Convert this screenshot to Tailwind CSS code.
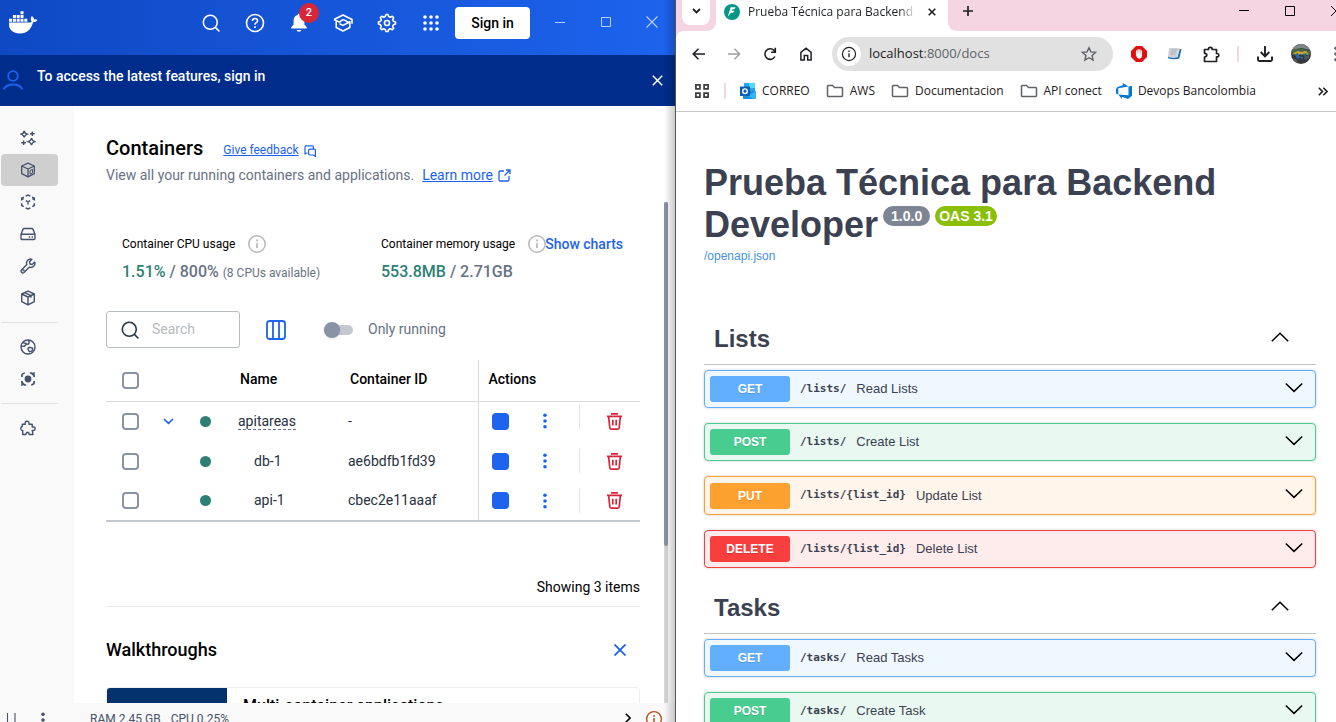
<!DOCTYPE html>
<html lang="en">
<head>
<meta charset="utf-8">
<title>Docker Desktop and API docs</title>
<script src="https://cdn.jsdelivr.net/npm/@tailwindcss/browser@4"></script>
</head>
<body class="h-screen overflow-hidden bg-white">
<svg width="0" height="0" class="hidden">
  <symbol id="search" viewBox="0 0 20 20"><g fill="none" stroke="currentColor" stroke-width="1.6" stroke-linecap="round"><circle cx="9.3" cy="9.3" r="7"/><path d="M14.6 14.6 18 18"/></g></symbol>
  <symbol id="info" viewBox="0 0 20 20"><circle cx="10" cy="10" r="8.2" fill="none" stroke="currentColor" stroke-width="1.5"/><path d="M10 9v5M10 5.6v1.8" stroke="currentColor" stroke-width="1.7" fill="none"/></symbol>
  <symbol id="down" viewBox="0 0 20 20"><path d="M1.8 5.5 10 13.4l8.2-7.9" fill="none" stroke="#000" stroke-width="1.5"/></symbol>
  <symbol id="up" viewBox="0 0 20 20"><path d="M1.8 14.2 10 6.2l8.2 8" fill="none" stroke="#000" stroke-width="1.5"/></symbol>
  <symbol id="folder" viewBox="0 0 18 14"><path d="M1.9 1.5h4.6l2 2h7.2q.8 0 .8.8v7.2q0 .9-.8.9H2.3q-.8 0-.8-.9V2.2q0-.7.6-.7z" fill="none" stroke="#5f6368" stroke-width="1.5"/></symbol>
  <symbol id="dots" viewBox="0 0 4 16"><g fill="currentColor"><circle cx="2" cy="2.3" r="1.8"/><circle cx="2" cy="8" r="1.8"/><circle cx="2" cy="13.7" r="1.8"/></g></symbol>
  <symbol id="trash" viewBox="0 0 18 18"><g fill="none" stroke="#d72638" stroke-width="1.8"><path d="M1 3.6h16M5.3 1h7.4M2.8 3.6l1.2 12q.1 1.4 1.4 1.4h7.2q1.300 0 1.400-1.400l1.200-12M7.200 7.200v6M10.800 7.200v6"/></g></symbol>
</svg>
<div class="grid h-screen grid-cols-[676fr_660fr]">

<!-- Docker Desktop -->
<section class="relative flex h-screen min-w-0 flex-col overflow-hidden border-r border-[#555] bg-white font-[Roboto,sans-serif] text-black">
  <header class="flex h-[55px] shrink-0 items-start bg-linear-to-r from-[#0f49c4] to-[#1d63ed] text-white">
    <svg class="mt-[10px] ml-[8px] h-6 w-[30px]" viewBox="0 0 30 24" fill="#fff"><path d="M1 12.6h20.6c1-.1 1.6-.4 2.1-1-1.4-1.700-1.200-3.900.1-5.700 1.500 1 2.200 2.200 2.300 3.600 1.300-.3 2.500-.1 3.300.6-.9 1.500-2.300 2.200-4.300 2.200C23.100 19.600 19 23.400 12 23.400 4.600 23.400.4 19.800 1 12.600z"/><path d="M1.100 8.800h3v3h-3zM4.900 8.800h3v3h-3zM8.700 8.800h3v3h-3zM12.500 8.800h3v3h-3zM16.300 8.800h3v3h-3zM4.900 5h3v3h-3zM8.700 5h3v3h-3zM12.500 5h3v3h-3zM12.500 1.200h3v3h-3z"/></svg>
    <div class="ml-auto flex h-[46px] items-center gap-6">
      <button aria-label="Search"><svg class="block size-5"><use href="#search"/></svg></button>
      <button aria-label="Help"><svg class="block size-5" viewBox="0 0 20 20" fill="none" stroke="currentColor" stroke-width="1.600"><circle cx="10" cy="10" r="8.500"/><path d="M7.400 8q.1-2.500 2.600-2.500t2.600 2.200Q12.600 9 11 9.900q-1 .6-1 1.900M10 13.200v1.700"/></svg></button>
      <button aria-label="Notifications, 2" class="relative"><svg class="block size-5" viewBox="0 0 20 20" fill="#fff"><path d="M10 .8c.9 0 1.400.6 1.400 1.300 2.700.7 4 2.800 4 5.300v4.200l2.400 2.700v1.300H2.200v-1.300l2.400-2.700V7.400c0-2.500 1.300-4.600 4-5.300C8.600 1.400 9.100.8 10 .8zM7.500 17h5q-.7 1.800-2.500 1.800T7.500 17z"/></svg><span class="absolute -top-[10px] left-[10px] size-5 rounded-full bg-[#d72638] text-center text-[11px] leading-5 font-medium">2</span></button>
      <button aria-label="Learning center"><svg class="block size-5" viewBox="0 0 20 20" fill="none" stroke="currentColor" stroke-width="1.600" stroke-linejoin="round"><path d="M1 6.500 10 2l9 4.500v4.200M3.200 8v6.500L10 18l6.800-3.500V8M1 6.500l5.500 2.600L9 7.200q1.300-.8 2.600-.1l4 2.400-5.600 2.900-3.500-1.700"/></svg></button>
      <button aria-label="Settings"><svg class="block size-5" viewBox="0 0 20 20" fill="none" stroke="currentColor" stroke-width="1.600" stroke-linejoin="round"><path d="M8.300 3.600 9 1.500h2l.7 2.100 1.600.7 2-1 1.400 1.400-1 2 .7 1.600 2.100.7v2l-2.100.7-.7 1.600 1 2-1.400 1.400-2-1-1.600.7-.7 2.100H9l-.7-2.100-1.600-.7-2 1-1.400-1.400 1-2-.7-1.600L1.500 11V9l2.100-.7.7-1.600-1-2 1.400-1.400 2 1z"/><circle cx="10" cy="10" r="2.500"/></svg></button>
      <button aria-label="Extensions"><svg class="block size-5" viewBox="0 0 20 20" fill="#fff"><g id="gr"><circle cx="4" cy="4" r="1.800"/><circle cx="10" cy="4" r="1.800"/><circle cx="16" cy="4" r="1.800"/></g><use href="#gr" y="6"/><use href="#gr" y="12"/></svg></button>
    </div>
    <button class="mt-[7px] ml-[14px] h-8 w-[75px] rounded bg-white text-sm font-medium text-black">Sign in</button>
    <div class="flex h-11 items-center gap-[34px] pr-[17px] pl-6 text-[#b9cdf8]">
      <button aria-label="Minimize"><svg class="block size-3" viewBox="0 0 12 12"><path d="M1 6.500h10" stroke="currentColor"/></svg></button>
      <button aria-label="Maximize"><svg class="block size-3" viewBox="0 0 12 12"><path d="M1.500 1.500h9v9h-9z" fill="none" stroke="currentColor"/></svg></button>
      <button aria-label="Close"><svg class="block size-3" viewBox="0 0 12 12"><path d="m.5.5 11 11m0-11-11 11" stroke="currentColor" stroke-width="1.100"/></svg></button>
    </div>
  </header>
  <div class="flex h-[51px] shrink-0 items-center bg-[#002d8c] text-white">
    <svg class="ml-[2px] size-[22px]" viewBox="0 0 22 22" fill="none" stroke="#1d63ed" stroke-width="1.800"><circle cx="11" cy="6" r="4.800"/><path d="M1.500 19.500q2.500-5 9.500-5t9.500 5"/></svg>
    <p class="ml-[13px] pb-[9px] text-sm font-medium">To access the latest features, <a href="#">sign in</a></p>
    <button aria-label="Dismiss" class="mr-3 ml-auto"><svg class="block size-[11px]" viewBox="0 0 11 11"><path d="m.8.800 9.400 9.400m0-9.400L.8 10.200" stroke="#fff" stroke-width="1.500"/></svg></button>
  </div>

  <div class="flex min-h-0 flex-1">
    <nav class="flex w-[74px] shrink-0 flex-col bg-[#f9f9fa] pt-4 pr-4 pl-px text-[#46516a]">
      <a href="#" aria-label="Ask Gordon" class="flex h-8 items-center justify-center"><svg class="mr-1 size-4" viewBox="0 0 16 16" fill="none" stroke="currentColor" stroke-width="1.400"><path d="M4.200 1q.5 2.400 3 3.200-2.500.8-3 3.200-.5-2.400-3-3.200 2.500-.8 3-3.200zM11.500 8.200q.5 2.700 3.300 3.500-2.800.8-3.300 3.500-.5-2.700-3.300-3.500 2.800-.8 3.300-3.500zM12.300 1.500v4.600M10 3.800h4.600M3.600 10.500v4.600M1.300 12.800h4.600"/></svg></a>
      <a href="#" aria-label="Containers" class="flex h-8 items-center justify-center rounded bg-[#cfcfd0]"><svg class="mr-1 size-4" viewBox="0 0 16 16" fill="none" stroke="currentColor" stroke-width="1.300" stroke-linejoin="round"><path d="M8 1.200 14.300 4v7.600L8 14.800l-6.300-3.200V4zM1.700 4 8 7l6.300-3M8 7v7.800"/><path d="M10 8.600l2.500-1.200v3.500L10 12.200z" stroke-width="1"/></svg></a>
      <a href="#" aria-label="Images" class="flex h-8 items-center justify-center"><svg class="mr-1 size-4" viewBox="0 0 16 16" fill="none" stroke="currentColor" stroke-width="1.500"><path d="M5.600 2.200 8 1l2.400 1.200M12.200 3.100l2.100 1.100v2.300M14.300 9.200v2.300l-2 1.100M10.400 13.800 8 15l-2.400-1.200M3.700 12.600l-2-1.100V9.200M1.700 6.500V4.200l2.100-1.100M1.700 4.200l2 1M14.300 4.200l-2 1M5.800 6.700 8 7.900l2.200-1.200M8 7.900v2.600"/></svg></a>
      <a href="#" aria-label="Volumes" class="flex h-8 items-center justify-center"><svg class="mr-1 size-4" viewBox="0 0 16 16" fill="none" stroke="currentColor" stroke-width="1.400"><path d="M1 8.500 3 3.300q.3-.8 1.200-.8h7.600q.9 0 1.200.8l2 5.200v3.800q0 1.200-1.200 1.200H2.200Q1 13.500 1 12.300zM1 8.300h14M8.800 11h1.400M11.600 11H13"/></svg></a>
      <a href="#" aria-label="Builds" class="flex h-8 items-center justify-center"><svg class="mr-1 size-4" viewBox="0 0 16 16" fill="none" stroke="currentColor" stroke-width="1.400" stroke-linejoin="round"><path d="M11.900 1.300a4 4 0 0 0-5 5.300L1.500 12q-1 1.200.1 2.400t2.400.1l5.400-5.400a4 4 0 0 0 5.300-5l-2.500 2.400-2.200-.5-.5-2.200z"/><circle cx="3.600" cy="12.400" r=".4"/></svg></a>
      <a href="#" aria-label="Models" class="flex h-8 items-center justify-center"><svg class="mr-1 size-4" viewBox="0 0 16 16" fill="none" stroke="currentColor" stroke-width="1.400" stroke-linejoin="round"><path d="M8 1.200 14.300 4v7.600L8 14.800l-6.300-3.200V4zM1.700 4 8 7l6.300-3M8 7v7.800M4.700 2.600 11 5.600v2.200"/></svg></a>
      <hr class="my-2 border-[#e1e2e6]">
      <a href="#" aria-label="Docker Hub" class="flex h-8 items-center justify-center"><svg class="mr-1 size-4" viewBox="0 0 16 16" fill="none" stroke="currentColor" stroke-width="1.400"><circle cx="8" cy="8" r="7"/><path d="M1 7q3 1 4-.5T8.600 5Q10 3 8.400 1M3 3.200q1.500 1.600 3.600 1M8 9.200l1.800-.9 2.800.9-.5 2.800-2.600.8L8.300 11z"/></svg></a>
      <a href="#" aria-label="Docker Scout" class="flex h-8 items-center justify-center"><svg class="mr-1 size-4" viewBox="0 0 16 16" fill="none" stroke="currentColor" stroke-width="1.700"><circle cx="8" cy="8" r="3.400" fill="currentColor" stroke="none"/><path d="M1.900 6V4.500Q2 2.500 4.800 2M14.100 10v1.500q-.1 2-2.900 2.500M9.800 2h1.700l2.600 2.300V6M6.200 14H4.500l-2.600-2.300V10"/><path d="M11 2.200 15 1l-1 4.200zM5 13.800 1 15l1-4.200z" fill="currentColor" stroke="none"/></svg></a>
      <hr class="my-2 border-[#e1e2e6]">
      <a href="#" aria-label="Extensions" class="flex h-8 items-center justify-center"><svg class="mr-1 size-4" viewBox="0 0 16 16" fill="none" stroke="currentColor" stroke-width="1.400" stroke-linejoin="round"><path d="M5.300 4.200q-.6-3 1.700-3t1.900 3h3.300V7q2.900-.4 2.900 1.700t-2.900 1.700L13 14.500H9.200q-.1-2.300-1.600-2.300T6 14.500H2.700v-3.800Q.7 10.200.7 8.500t1.600-2V4.200z"/></svg></a>
    </nav>

    <main class="flex min-w-0 flex-1 flex-col pt-[30px] pr-[7px] pl-8">
      <div class="flex h-6 items-center">
        <h1 class="text-xl font-medium">Containers</h1>
        <a href="#" class="ml-5 flex items-center gap-[5px] pt-1 text-xs text-[#1d63ed]"><span class="underline">Give feedback</span><svg class="mt-[2px] size-3" viewBox="0 0 12 12" fill="none" stroke="currentColor" stroke-width="1.200" stroke-linejoin="round"><path d="M3.500 8H2.800L1 9V2q0-1.200 1.200-1.200h6Q9.400.800 9.400 2v2M5.800 4.200h4.400q1.200 0 1.200 1.200v6L9.500 10H5.800q-1.200 0-1.200-1.200V5.400q0-1.200 1.200-1.200z"/></svg></a>
      </div>
      <p class="mt-1 flex h-[22px] shrink-0 items-center text-sm text-[#677285]">View all your running containers and applications.<a href="#" class="ml-2 flex items-center gap-[5px] text-[#1d63ed]"><span class="underline">Learn more</span><svg class="size-[13px]" viewBox="0 0 13 13" fill="none" stroke="currentColor" stroke-width="1.300"><path d="M6 2H2.200Q1 2 1 3.200v7.600Q1 12 2.200 12h7.600q1.200 0 1.200-1.200V7M8 1h4v4M12 1 6.500 6.500"/></svg></a></p>

      <div class="mt-4 flex min-h-0 flex-1">
        <div class="mr-6 min-w-0 flex-1 overflow-hidden">
          <div class="flex pt-8 pl-4">
            <div class="w-[259px] shrink-0">
              <div class="flex h-5 items-center gap-3 text-xs">Container CPU usage <svg class="size-5 text-[#b8b8b8]"><use href="#info"/></svg></div>
              <div class="mt-[6px] h-6 text-base leading-6 font-medium text-[#677285]"><span class="text-[#2e7f74]">1.51%</span> / 800% <span class="text-xs font-normal">(8 CPUs available)</span></div>
            </div>
            <div>
              <div class="flex h-5 items-center text-xs">Container memory usage <svg class="ml-3 size-5 text-[#b8b8b8]"><use href="#info"/></svg><button class="-ml-[2px] pb-px text-sm font-medium whitespace-nowrap text-[#1d63ed]">Show charts</button></div>
              <div class="mt-[6px] h-6 text-base leading-6 font-medium text-[#677285]"><span class="text-[#2e7f74]">553.8MB</span> / 2.71GB</div>
            </div>
          </div>
          <div class="mt-[27px] flex items-center">
            <label class="flex h-[37px] w-[134px] items-center gap-3 rounded-[3px] border border-[#b9bdc6] pl-[13px]"><svg class="size-5 shrink-0 text-[#2b3445]"><use href="#search"/></svg><input type="search" placeholder="Search" aria-label="Search containers" class="w-20 pb-px text-sm outline-none placeholder:text-[#b5b9c0]"></label>
            <button aria-label="Columns" class="ml-[26px]"><svg class="block size-5" viewBox="0 0 20 20" fill="none" stroke="#1d63ed" stroke-width="1.800"><rect x="1" y="1" width="18" height="18" rx="2.500"/><path d="M7 1v18M13 1v18"/></svg></button>
            <label class="ml-[38px] flex items-center text-sm text-[#677285]"><span class="relative mr-[15px] flex h-4 w-[29px] items-center"><span class="h-[10px] w-full rounded-full bg-[#c4c8d1]"></span><input type="checkbox" role="switch" class="absolute left-0 size-4 appearance-none rounded-full bg-[#8993a5] shadow"></span><span class="pb-px">Only running</span></label>
          </div>
          <table class="mt-3 w-full table-fixed border-collapse border-b-2 border-[#c4c8d1] text-left text-sm">
            <colgroup><col class="w-[44px]"><col class="w-[36px]"><col class="w-[38px]"><col class="w-[116px]"><col><col class="w-[162px]"></colgroup>
            <thead><tr class="h-[41px] border-b border-[#d9dbe0]">
              <th class="pl-4"><input type="checkbox" aria-label="Select all" class="block size-[17px] appearance-none rounded-[4px] border-2 border-[#8993a5]"></th><th></th><th></th>
              <th class="pb-[2px] pl-4 font-medium">Name</th><th class="pb-[2px] pl-[10px] font-medium">Container ID</th><th class="border-l border-[#d9dbe0] pb-[2px] pl-[10px] font-medium">Actions</th></tr></thead>
            <tbody class="text-[#27303f]">
              <tr class="h-10"><td class="pl-4"><input type="checkbox" aria-label="Select apitareas" class="block size-[17px] appearance-none rounded-[4px] border-2 border-[#8993a5]"></td>
                <td><button aria-label="Collapse" class="mx-auto block"><svg class="block h-[7px] w-[11px]" viewBox="0 0 11 7"><path d="m1 1 4.500 4.300L10 1" fill="none" stroke="#1d63ed" stroke-width="1.700"/></svg></button></td>
                <td><span class="mx-auto block size-[11px] rounded-full bg-[#2e7f74]"></span></td><td class="pl-[14px]"><a href="#" class="border-b border-dashed border-[#677285]">apitareas</a></td><td class="pl-2">-</td>
                <td class="border-l border-[#d9dbe0]"><div class="flex items-center pl-[13px]"><button aria-label="Stop apitareas" class="size-[17px] rounded-[4px] bg-[#1d63ed]"></button><button aria-label="More" class="ml-[34px] text-[#1d63ed]"><svg class="block h-4 w-1"><use href="#dots"/></svg></button><span class="mb-2 ml-8 h-6 w-px bg-[#e1e2e6]"></span><button aria-label="Delete apitareas" class="ml-[26px]"><svg class="block size-[17px]"><use href="#trash"/></svg></button></div></td></tr>
              <tr class="h-10"><td class="pl-4"><input type="checkbox" aria-label="Select db-1" class="block size-[17px] appearance-none rounded-[4px] border-2 border-[#8993a5]"></td><td></td>
                <td><span class="mx-auto block size-[11px] rounded-full bg-[#2e7f74]"></span></td><td class="pb-px pl-[30px]">db-1</td><td class="pb-px pl-2">ae6bdfb1fd39</td>
                <td class="border-l border-[#d9dbe0]"><div class="flex items-center pl-[13px]"><button aria-label="Stop db-1" class="size-[17px] rounded-[4px] bg-[#1d63ed]"></button><button aria-label="More" class="ml-[34px] text-[#1d63ed]"><svg class="block h-4 w-1"><use href="#dots"/></svg></button><span class="ml-8 h-6 w-px bg-[#e1e2e6]"></span><button aria-label="Delete db-1" class="ml-[26px]"><svg class="block size-[17px]"><use href="#trash"/></svg></button></div></td></tr>
              <tr class="h-10"><td class="pl-4"><input type="checkbox" aria-label="Select api-1" class="block size-[17px] appearance-none rounded-[4px] border-2 border-[#8993a5]"></td><td></td>
                <td><span class="mx-auto block size-[11px] rounded-full bg-[#2e7f74]"></span></td><td class="pb-px pl-[30px]">api-1</td><td class="pb-px pl-2">cbec2e11aaaf</td>
                <td class="border-l border-[#d9dbe0]"><div class="flex items-center pl-[13px]"><button aria-label="Stop api-1" class="size-[17px] rounded-[4px] bg-[#1d63ed]"></button><button aria-label="More" class="ml-[34px] text-[#1d63ed]"><svg class="block h-4 w-1"><use href="#dots"/></svg></button><span class="ml-8 h-6 w-px bg-[#e1e2e6]"></span><button aria-label="Delete api-1" class="ml-[26px]"><svg class="block size-[17px]"><use href="#trash"/></svg></button></div></td></tr>
            </tbody>
          </table>
          <p class="mt-[55px] border-b border-[#e8e9ec] pb-[9px] text-right text-sm">Showing 3 items</p>
          <div class="mt-[30px] flex h-[26px] items-center justify-between">
            <h2 class="text-lg font-medium">Walkthroughs</h2>
            <button aria-label="Close walkthroughs" class="mr-[14px]"><svg class="block size-3" viewBox="0 0 12 12"><path d="m.5.5 11 11m0-11-11 11" stroke="#1d63ed" stroke-width="1.800"/></svg></button>
          </div>
          <a href="#" class="mt-6 flex h-24 overflow-hidden rounded border border-[#efeff2]"><span class="w-[120px] bg-[#04326e]"></span><span class="pt-2 pl-4 text-base leading-5 font-medium">Multi-container applications</span></a>
        </div>
        <div class="flex w-1 shrink-0 flex-col bg-[#d8d8da]"><span class="h-[344px] rounded-full bg-[#8993a5]"></span></div>
      </div>
    </main>
  </div>
  <footer class="flex h-[19px] shrink-0 items-start overflow-hidden bg-[#f9f9fa] pr-[11px] pl-[6px] text-xs text-[#46516a]">
    <button aria-label="Pause" class="pt-[10px]"><svg class="block h-3 w-[10px]" viewBox="0 0 10 12"><path d="M1.500 0v12M9 0v12" stroke="currentColor" stroke-width="1.100"/></svg></button>
    <button aria-label="More" class="pt-[9px] pl-[25px]"><svg class="block h-4 w-1"><use href="#dots"/></svg></button>
    <span class="ml-[45px] pt-2">RAM 2.45 GB</span><span class="ml-[10px] pt-2">CPU 0.25%</span>
    <button aria-label="Next" class="ml-auto pt-[10px] text-black"><svg class="block h-[10px] w-[6px]" viewBox="0 0 6 10"><path d="m.8.800 4.200 4.200-4.200 4.200" fill="none" stroke="currentColor" stroke-width="1.600"/></svg></button>
    <svg class="mt-[7px] mr-px ml-[14px] size-[18px] text-[#c0501b]"><use href="#info"/></svg>
  </footer>
  <div class="pointer-events-none absolute inset-y-0 right-0 w-[11px] bg-linear-to-r from-black/0 to-black/20"></div>
</section>

<!-- Browser window -->
<section class="flex h-screen min-w-0 flex-col overflow-hidden bg-white font-['Open_Sans','Noto_Sans',sans-serif] text-[#1f2023]">
  <div class="flex h-[31px] shrink-0 items-start bg-[#f6d5e3]">
    <button aria-label="Search tabs" class="ml-[6px] flex h-[25px] w-7 items-center justify-center rounded-b-lg bg-white"><svg class="mb-1 h-[6px] w-[9px]" viewBox="0 0 9 6"><path d="m1 1 3.500 3.500L8 1" fill="none" stroke="#1f2023" stroke-width="1.800"/></svg></button>
    <div class="relative ml-[6px] flex h-[31px] w-[232px] items-center bg-white pb-[7px] pl-2">
      <svg class="absolute bottom-0 -left-[10px] size-[10px]" viewBox="0 0 10 10"><path d="M10 0v10H0Q10 10 10 0z" fill="#fff"/></svg>
      <svg class="absolute -right-[10px] bottom-0 size-[10px]" viewBox="0 0 10 10"><path d="M0 0v10h10Q0 10 0 0z" fill="#fff"/></svg>
      <svg class="size-4 shrink-0" viewBox="0 0 16 16"><circle cx="8" cy="8" r="8" fill="#049789"/><path d="M6.700 3.300h5l-1.500 2H8.300L8 6.700h2.500L9 8.700H7l-3.300 4.100z" fill="#fff"/></svg>
      <span class="ml-2 w-[168px] overflow-hidden mask-r-from-90% text-xs whitespace-nowrap">Prueba Técnica para Backend Developer</span>
      <button aria-label="Close tab" class="ml-3"><svg class="block size-2" viewBox="0 0 8 8"><path d="m.7.700 6.600 6.600m0-6.600L.7 7.300" stroke="#1f2023" stroke-width="1.600"/></svg></button>
    </div>
    <button aria-label="New tab" class="mt-[6px] ml-[15px]"><svg class="block size-[10px]" viewBox="0 0 10 10"><path d="M5 0v10M0 5h10" stroke="#1f2023" stroke-width="1.700"/></svg></button>
    <div class="-mr-[5px] ml-auto flex gap-9 pt-[6px]">
      <button aria-label="Minimize window"><svg class="block size-[10px]" viewBox="0 0 10 10"><path d="M0 4.500h10" stroke="#000"/></svg></button>
      <button aria-label="Maximize window"><svg class="block size-[10px]" viewBox="0 0 10 10"><path d="M.5.5h9v9h-9z" fill="none" stroke="#000"/></svg></button>
      <button aria-label="Close window"><svg class="block size-[10px]" viewBox="0 0 10 10"><path d="m0 0 10 10M10 0 0 10" stroke="#000"/></svg></button>
    </div>
  </div>
  <div class="shrink-0 bg-[#f6d5e3]">
  <div class="flex h-[46px] items-center rounded-tl-lg bg-white pl-4 text-[#1f2023]">
    <button aria-label="Back"><svg class="block h-3 w-[13px]" viewBox="0 0 13 12"><path d="M6.500.8 1.300 6l5.200 5.200M1.300 6H13" fill="none" stroke="currentColor" stroke-width="1.600"/></svg></button>
    <button aria-label="Forward" class="ml-[23px] text-[#a0a0a2]"><svg class="block h-3 w-[13px]" viewBox="0 0 13 12"><path d="M6.500.8 11.700 6l-5.200 5.200M11.700 6H0" fill="none" stroke="currentColor" stroke-width="1.500"/></svg></button>
    <button aria-label="Reload" class="ml-[22px]"><svg class="block size-[14px]" viewBox="0 0 14 14"><path d="M11.900 9.500A5.300 5.300 0 1 1 11 3.400l1 1.100M12.300.8v4.400H8" fill="none" stroke="currentColor" stroke-width="1.600"/></svg></button>
    <button aria-label="Home" class="ml-[23px]"><svg class="block h-[14px] w-3" viewBox="0 0 12 14"><path d="M.9 5.400 6 1.200l5.100 4.200v7.700H7.700V8.500H4.300v4.600H.9z" fill="none" stroke="currentColor" stroke-width="1.500"/></svg></button>
    <div class="ml-5 flex h-[34px] min-w-0 flex-1 items-center rounded-full bg-[#e1e1e1] pr-4 pl-[5px]">
      <button aria-label="Site information" class="flex size-6 items-center justify-center rounded-full bg-white"><svg class="size-4"><use href="#info"/></svg></button>
      <div class="ml-2 flex-1 text-[13px] text-[#5f6368]"><span class="text-[#1f2023]">localhost</span>:8000/docs</div>
      <button aria-label="Bookmark"><svg class="block size-4" viewBox="0 0 16 16"><path d="m8 1.700 1.900 4.200 4.600.5-3.400 3.100 1 4.500L8 11.700 3.900 14l1-4.500-3.400-3.100 4.600-.5z" fill="none" stroke="#5f6368" stroke-width="1.400"/></svg></button>
    </div>
    <button aria-label="Ad blocker" class="ml-[18px]"><svg class="block size-4" viewBox="0 0 16 16"><path d="M5 0h6l5 5v6l-5 5H5l-5-5V5z" fill="#e01010"/><path d="M5.600 9V4.800M7.200 8V3.600M8.800 8V3.600M10.400 9V4.800" stroke="#fff" stroke-width="1.300" stroke-linecap="round"/><path d="M5 7.500h6V10q-.5 2.800-2.700 2.800T5.300 10z" fill="#fff"/></svg></button>
    <button aria-label="Notes extension" class="ml-5"><svg class="block size-4" viewBox="0 0 16 16"><path d="M2 2h10.500L10 11H1z" fill="#cfd3d8"/><path d="M4 4h6M3.500 6H9M3 8h5.500" stroke="#aab0b8"/><path d="M12.800 3 14.500 3.300l-2.300 9.200Q7 14 1 12.300v-1.300q5 1.200 9.600.3z" fill="#1467ae"/></svg></button>
    <button aria-label="Extensions" class="ml-5"><svg class="block size-[17px]" viewBox="0 0 17 17"><path d="M1.500 3.500h4Q5.300 1.300 7.300 1.300T9.200 3.500h4.300v4q2.300-.2 2.300 1.700t-2.300 1.700v4.600h-12V11q2.300-.2 2.300-1.900T1.500 7.300z" fill="none" stroke="currentColor" stroke-width="1.700" stroke-linejoin="round"/></svg></button>
    <span class="ml-[17px] h-4 w-[2px] bg-[#f6d5e3]"></span>
    <button aria-label="Downloads" class="ml-[18px]"><svg class="block size-4" viewBox="0 0 16 16"><path d="M8 0v10M3.700 6 8 10.300 12.300 6M1 10.500v3.300q0 1.200 1.200 1.200h11.600q1.200 0 1.200-1.200v-3.300" fill="none" stroke="currentColor" stroke-width="1.900"/></svg></button>
    <button aria-label="Profile" class="ml-[18px]"><svg class="block size-5" viewBox="0 0 20 20"><defs><clipPath id="av"><circle cx="10" cy="10" r="10"/></clipPath></defs><g clip-path="url(#av)"><path d="M0 0h20v20H0z" fill="#343638"/><path d="M0 0h20v6L10 4 0 7z" fill="#7c8686"/><path d="M0 6l9-2 11 3v4H0z" fill="#46624a"/><path d="M2 9l5-2 3 1 5-1 3 3-4 1-5-1-3 2z" fill="#c9a92b"/><path d="m4 10 3-1 2 5-3 1zM11 10l5-1-2 4zM8 12l4 1-1 3z" fill="#2767a8"/><path d="M2 14l4 2 1 4H2zM13 13l5-2v3l-4 2z" fill="#55595c"/></g></svg></button>
    <button aria-label="Menu" class="ml-[23px] w-[2px] overflow-hidden text-[#5f6368]"><svg class="block h-4 w-1"><use href="#dots"/></svg></button>
  </div>
  </div>
  <div class="flex h-[35px] shrink-0 items-center border-b border-[#c9c9c9] pb-[6px] pl-[19px] text-xs whitespace-nowrap">
    <button aria-label="Apps"><svg class="block size-[14px]" viewBox="0 0 14 14"><path d="M.9.9h4v4h-4zM9.100.9h4v4h-4zM.9 9.100h4v4h-4zM9.100 9.100h4v4h-4z" fill="none" stroke="#3c3c3e" stroke-width="1.700"/></svg></button>
    <span class="ml-[15px] h-4 w-[2px] bg-[#f6d5e3]"></span>
    <a href="#" class="ml-[14px] flex items-center gap-[6px]"><svg class="size-4" viewBox="0 0 16 16"><path d="M4 0h11v8H4z" fill="#28a8ea"/><path d="M9 0h6v5H9z" fill="#50d9ff"/><path d="M3 7l12.500 1v8H3z" fill="#1490df"/><path d="m16 8-8 5 6 3h2z" fill="#35b8f1"/><path d="M0 3.500h10v9.500H0z" fill="#0a5fb4"/><circle cx="5" cy="8.200" r="2.300" fill="none" stroke="#fff" stroke-width="1.400"/></svg>CORREO</a>
    <a href="#" class="ml-4 flex items-center gap-[6px]"><svg class="h-[14px] w-[18px]"><use href="#folder"/></svg>AWS</a>
    <a href="#" class="ml-4 flex items-center gap-[6px]"><svg class="h-[14px] w-[18px]"><use href="#folder"/></svg>Documentacion</a>
    <a href="#" class="ml-4 flex items-center gap-[6px]"><svg class="h-[14px] w-[18px]"><use href="#folder"/></svg>API conect</a>
    <a href="#" class="ml-[14px] flex items-center gap-[6px]"><svg class="size-4" viewBox="0 0 16 16"><path d="M16 3v9.700l-4 3.300-6.200-2.300V16l-3.500-4.600 10.200.8V3.500zM12.500 3.600 6.800 0v2.300L1.500 3.900 0 5.900v4.500l2.300 1V5.200z" fill="#0078d4"/></svg>Devops Bancolombia</a>
    <button aria-label="More bookmarks" class="mr-2 ml-auto"><svg class="block h-[9px] w-[10px]" viewBox="0 0 10 9"><path d="m.8.800 3.700 3.700L.8 8.200M5.300.8 9 4.500 5.300 8.200" fill="none" stroke="#1f2023" stroke-width="1.600"/></svg></button>
  </div>

  <main class="min-h-0 flex-1 overflow-hidden pt-[50px] pr-5 pl-7 font-['Liberation_Sans',Arial,sans-serif] text-[#3b4151]">
    <h1 class="text-4xl leading-[42px] font-bold">Prueba Técnica para Backend Developer<span class="ml-[5px] inline-flex gap-[5px] align-[16px] text-sm leading-5 text-white"><span class="rounded-full bg-[#7d8492] px-2">1.0.0</span><span class="rounded-full bg-[#89bf04] px-1">OAS 3.1</span></span></h1>
    <a href="#" class="mt-[2px] block text-xs leading-4 text-[#4990e2]">/openapi.json</a>

    <h2 class="mt-[51px] flex h-[50px] items-center justify-between border-b border-[#c0c1c5] pr-[26px] pb-[2px] pl-[10px] text-2xl font-bold">Lists<button aria-label="Collapse Lists" class="pb-[3px]"><svg class="block size-5"><use href="#up"/></svg></button></h2>
    <div class="mt-[5px] flex flex-col gap-[15px] text-[13px]">
      <button class="flex h-[38px] items-center rounded border border-[#61affe] bg-[#eff7ff] pr-[11px] pl-[5px] text-left shadow-[0_0_3px_rgba(0,0,0,0.19)]"><span class="h-[26px] w-20 rounded-[3px] bg-[#61affe] text-center text-xs leading-[26px] font-bold text-white text-shadow-2xs">GET</span><span class="ml-[10px] font-['DejaVu_Sans_Mono',monospace] text-[11px] font-bold">/lists/</span><span class="ml-[10px] flex-1">Read Lists</span><svg class="mb-[3px] size-5"><use href="#down"/></svg></button>
      <button class="flex h-[38px] items-center rounded border border-[#49cc90] bg-[#e9f9f2] pr-[11px] pl-[5px] text-left shadow-[0_0_3px_rgba(0,0,0,0.19)]"><span class="h-[26px] w-20 rounded-[3px] bg-[#49cc90] text-center text-xs leading-[26px] font-bold text-white text-shadow-2xs">POST</span><span class="ml-[10px] font-['DejaVu_Sans_Mono',monospace] text-[11px] font-bold">/lists/</span><span class="ml-[10px] flex-1">Create List</span><svg class="mb-[3px] size-5"><use href="#down"/></svg></button>
      <button class="flex h-[39px] items-center rounded border border-[#fca130] bg-[#fff5ea] pr-[11px] pl-[5px] text-left shadow-[0_0_3px_rgba(0,0,0,0.19)]"><span class="h-[26px] w-20 rounded-[3px] bg-[#fca130] text-center text-xs leading-[26px] font-bold text-white text-shadow-2xs">PUT</span><span class="ml-[10px] font-['DejaVu_Sans_Mono',monospace] text-[11px] font-bold">/lists/{list_id}</span><span class="ml-[10px] flex-1">Update List</span><svg class="mb-[3px] size-5"><use href="#down"/></svg></button>
      <button class="flex h-[38px] items-center rounded border border-[#f93e3e] bg-[#feebeb] pr-[11px] pl-[5px] text-left shadow-[0_0_3px_rgba(0,0,0,0.19)]"><span class="h-[26px] w-20 rounded-[3px] bg-[#f93e3e] text-center text-xs leading-[26px] font-bold text-white text-shadow-2xs">DELETE</span><span class="ml-[10px] font-['DejaVu_Sans_Mono',monospace] text-[11px] font-bold">/lists/{list_id}</span><span class="ml-[10px] flex-1">Delete List</span><svg class="mb-[3px] size-5"><use href="#down"/></svg></button>
    </div>
    <h2 class="mt-4 flex h-[50px] items-center justify-between border-b border-[#c0c1c5] pr-[26px] pb-[2px] pl-[10px] text-2xl font-bold">Tasks<button aria-label="Collapse Tasks" class="pb-[3px]"><svg class="block size-5"><use href="#up"/></svg></button></h2>
    <div class="mt-[5px] flex flex-col gap-[15px] text-[13px]">
      <button class="flex h-[38px] items-center rounded border border-[#61affe] bg-[#eff7ff] pr-[11px] pl-[5px] text-left shadow-[0_0_3px_rgba(0,0,0,0.19)]"><span class="h-[26px] w-20 rounded-[3px] bg-[#61affe] text-center text-xs leading-[26px] font-bold text-white text-shadow-2xs">GET</span><span class="ml-[10px] font-['DejaVu_Sans_Mono',monospace] text-[11px] font-bold">/tasks/</span><span class="ml-[10px] flex-1">Read Tasks</span><svg class="mb-[3px] size-5"><use href="#down"/></svg></button>
      <button class="flex h-[38px] items-center rounded border border-[#49cc90] bg-[#e9f9f2] pr-[11px] pl-[5px] text-left shadow-[0_0_3px_rgba(0,0,0,0.19)]"><span class="h-[26px] w-20 rounded-[3px] bg-[#49cc90] text-center text-xs leading-[26px] font-bold text-white text-shadow-2xs">POST</span><span class="ml-[10px] font-['DejaVu_Sans_Mono',monospace] text-[11px] font-bold">/tasks/</span><span class="ml-[10px] flex-1">Create Task</span><svg class="mb-[3px] size-5"><use href="#down"/></svg></button>
    </div>
  </main>
</section>
</div>
</body>
</html>
